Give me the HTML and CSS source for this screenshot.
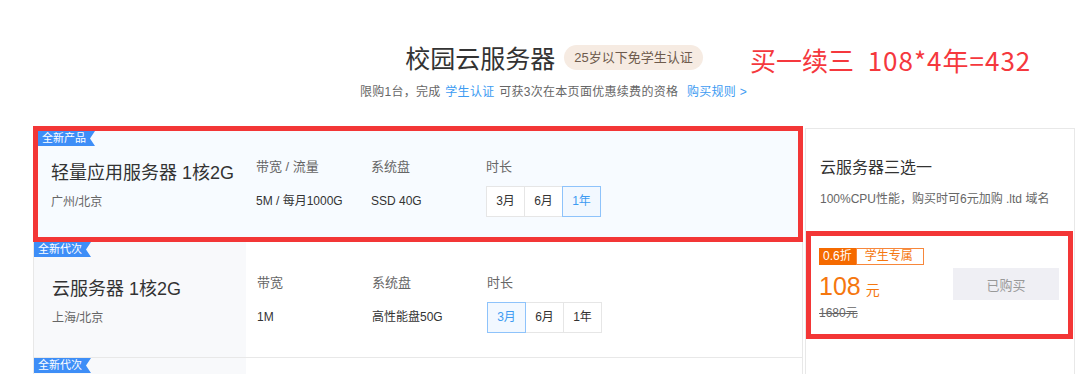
FILE: index.html
```html
<!DOCTYPE html>
<html lang="zh-CN">
<head>
    <meta charset="UTF-8">
    <title>校园云服务器</title>
    <link rel="stylesheet" href="styles.css">
</head>
<body>
    <div class="page">
        <div class="head">
            <h1>校园云服务器</h1>
            <span class="badge">25岁以下免学生认证</span>
        </div>
        <p class="sub">限购1台，完成 <a>学生认证</a> 可获3次在本页面优惠续费的资格 <a class="rule">购买规则 &gt;</a></p>
        <div class="note">买一续三&nbsp;&nbsp;<span class="num">108*4年=432</span></div>

        <div class="main">
            <div class="list">
                <div class="row selected marked">
                    <span class="tag">全新产品</span>
                    <div class="name">
                        <div class="title">轻量应用服务器 1核2G</div>
                        <div class="area">广州/北京</div>
                    </div>
                    <div class="spec">
                        <div class="label">带宽 / 流量</div>
                        <div class="value">5M / 每月1000G</div>
                    </div>
                    <div class="spec">
                        <div class="label">系统盘</div>
                        <div class="value">SSD 40G</div>
                    </div>
                    <div class="spec">
                        <div class="label">时长</div>
                        <div class="opts">
                            <span class="opt">3月</span><span class="opt">6月</span><span class="opt active">1年</span>
                        </div>
                    </div>
                </div>
                <div class="row">
                    <span class="tag">全新代次</span>
                    <div class="name">
                        <div class="title">云服务器 1核2G</div>
                        <div class="area">上海/北京</div>
                    </div>
                    <div class="spec">
                        <div class="label">带宽</div>
                        <div class="value">1M</div>
                    </div>
                    <div class="spec">
                        <div class="label">系统盘</div>
                        <div class="value">高性能盘50G</div>
                    </div>
                    <div class="spec">
                        <div class="label">时长</div>
                        <div class="opts">
                            <span class="opt active">3月</span><span class="opt">6月</span><span class="opt">1年</span>
                        </div>
                    </div>
                </div>
                <div class="row short">
                    <span class="tag">全新代次</span>
                    <div class="name"></div>
                </div>
            </div>

            <div class="side">
                <div class="side-title">云服务器三选一</div>
                <div class="side-desc">100%CPU性能，购买时可6元加购 .ltd 域名</div>
                <div class="price-box">
                    <div class="price-info">
                        <div class="discount"><span class="off">0.6折</span><span class="only">学生专属</span></div>
                        <div class="price">108<span class="unit">元</span></div>
                        <div class="old">1680元</div>
                    </div>
                    <button class="buy">已购买</button>
                </div>
            </div>
        </div>
    </div>
</body>
</html>
```

FILE: styles.css
```css
body {
    margin: 0;
    background: #fff;
    font-family: "Liberation Sans", "Noto Sans CJK SC", sans-serif;
    color: #333;
}
.page {
    position: relative;
    width: 1042px;
    margin-left: 33px;
    padding-top: 40px;
}
.head {
    display: flex;
    justify-content: center;
    align-items: center;
    gap: 9px;
    height: 34px;
}
.head h1 {
    margin: 0;
    font-size: 25px;
    font-weight: normal;
    color: #333;
}
.badge {
    background: #f6ebe2;
    color: #6e5b4d;
    font-size: 13px;
    height: 25px;
    line-height: 25px;
    padding: 0 10px;
    border-radius: 13px;
}
.sub {
    margin: 9px 0 0;
    text-align: center;
    font-size: 12px;
    line-height: 18px;
    color: #666;
    letter-spacing: 0.3px;
}
.sub a {
    color: #3d9bf2;
    margin: 0 1px;
}
.sub .rule {
    margin-left: 5px;
}
.note {
    position: absolute;
    left: 717px;
    top: 43px;
    font-family: "Noto Sans CJK SC", sans-serif;
    font-size: 26px;
    line-height: 34px;
    color: #f5383d;
}
.note .num {
    margin-left: 2px;
    letter-spacing: 1px;
}

.main {
    display: flex;
    margin-top: 25px;
}
.list {
    width: 770px;
    box-sizing: border-box;
    border-left: 1px solid #e8e8e8;
    border-right: 1px solid #e8e8e8;
}
.row {
    position: relative;
    display: flex;
    height: 116px;
    box-sizing: border-box;
    border-bottom: 1px solid #e8e8e8;
}
.row.short {
    height: 16px;
    border-bottom: none;
}
.row.selected {
    background: #f7fbff;
}
.row.marked {
    border: 5px solid #f33636;
    margin-left: -1px;
    margin-right: -1px;
}
.tag {
    position: absolute;
    top: 0;
    left: 0;
    height: 15px;
    line-height: 15px;
    padding: 0 9px 0 4px;
    font-size: 11px;
    color: #fff;
    background: #3e8ef7;
    clip-path: polygon(0 0, 100% 0, calc(100% - 5px) 50%, 100% 100%, 0 100%);
}
.name {
    width: 212px;
    box-sizing: border-box;
    padding: 35px 0 0 18px;
    background: #f8f9fb;
}
.row.marked .name {
    width: 207px;
    padding: 30px 0 0 13px;
    background: transparent;
}
.title {
    font-size: 18px;
    line-height: 24px;
    color: #333;
}
.area {
    margin-top: 8px;
    font-size: 12px;
    line-height: 18px;
    color: #666;
}
.spec {
    width: 115px;
    padding-top: 32px;
    font-size: 12px;
}
.spec:nth-child(3) {
    margin-left: 11px;
}
.row.marked .spec {
    padding-top: 27px;
}
.label {
    font-size: 13px;
    line-height: 18px;
    color: #666;
}
.value {
    margin-top: 10px;
    line-height: 31px;
    color: #333;
}
.opts {
    display: flex;
    margin-top: 10px;
}
.opt {
    width: 43px;
    height: 31px;
    line-height: 29px;
    box-sizing: border-box;
    text-align: center;
    border: 1px solid #e6e6e6;
    margin-left: -1px;
    background: #fff;
    font-size: 12px;
    color: #333;
}
.opt:first-child {
    margin-left: 0;
}
.opt.active {
    position: relative;
    border-color: #8ec3fb;
    background: #f2f8ff;
    color: #3d9bf2;
}

.side {
    width: 270px;
    height: 246px;
    margin: 2px 0 0 2px;
    box-sizing: border-box;
    border: 1px solid #e8e8e8;
    border-bottom: none;
    padding-top: 28px;
}
.side-title {
    padding-left: 14px;
    font-size: 16px;
    line-height: 22px;
    color: #333;
}
.side-desc {
    margin-top: 11px;
    padding-left: 14px;
    font-size: 12px;
    line-height: 18px;
    color: #666;
}
.price-box {
    display: flex;
    justify-content: space-between;
    align-items: flex-start;
    height: 108px;
    margin: 23px 1px 0 0;
    box-sizing: border-box;
    border: 5px solid #f33636;
    padding: 12px 9px 0 8px;
}
.discount {
    display: flex;
    height: 17px;
    font-size: 12px;
    line-height: 15px;
}
.off {
    background: #f56a00;
    color: #fff;
    padding: 1px 4px 0;
}
.only {
    border: 1px solid #f7873b;
    color: #f5770f;
    padding: 0 10px 0 8px;
}
.price {
    margin-top: 7px;
    font-size: 25px;
    line-height: 28px;
    color: #f5770f;
}
.unit {
    margin-left: 5px;
    font-size: 14px;
}
.old {
    margin-top: 1px;
    font-size: 12px;
    line-height: 16px;
    color: #666;
    text-decoration: line-through;
}
.buy {
    width: 106px;
    height: 32px;
    margin-top: 20px;
    border: none;
    background: #efeff4;
    color: #999;
    font-family: inherit;
    font-size: 13px;
}
```
